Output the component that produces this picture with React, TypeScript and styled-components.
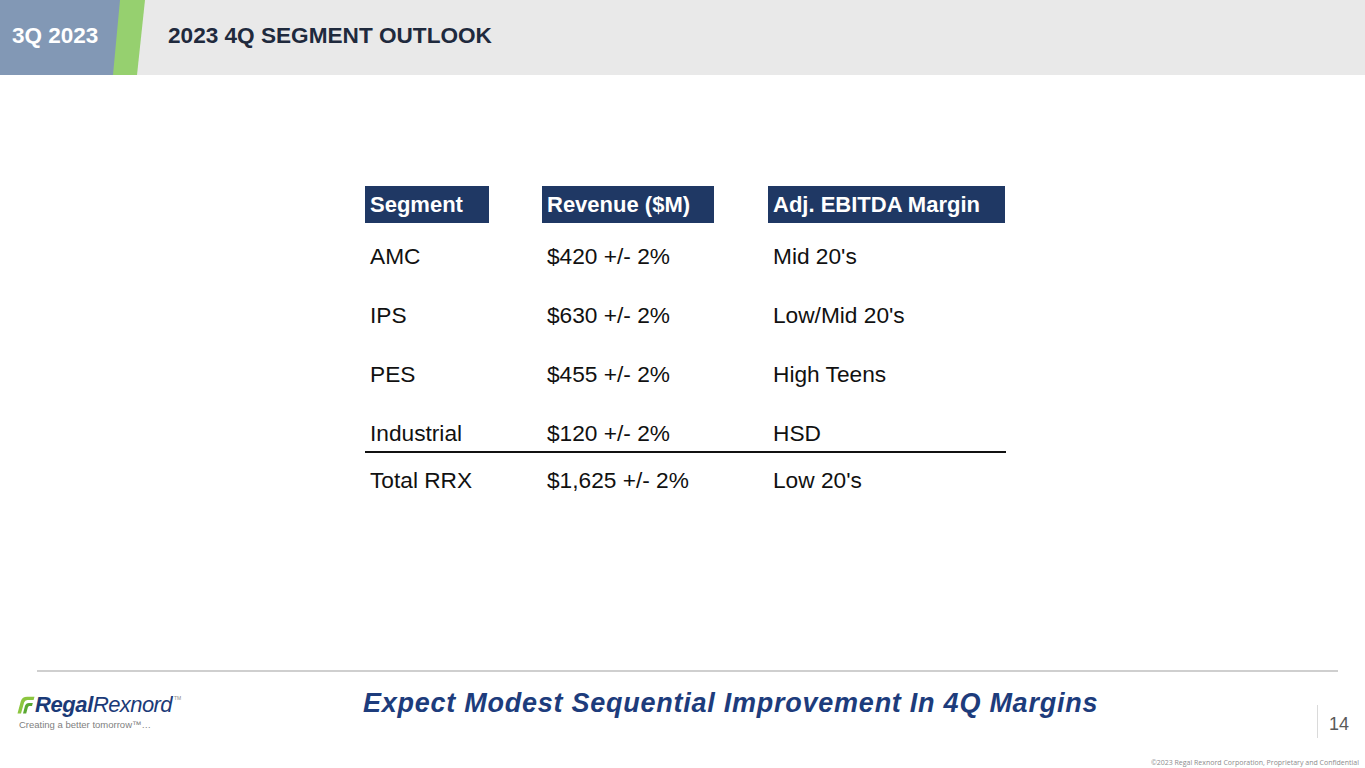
import React from "react";
import styled, { createGlobalStyle } from "styled-components";

const Global = createGlobalStyle`
  html, body { margin: 0; padding: 0; background: #ffffff; }
  body { font-family: "Liberation Sans", Arial, sans-serif; }
`;

const Slide = styled.div`
  width: 1365px;
  height: 768px;
  display: flex;
  flex-direction: column;
  overflow: hidden;
  background: #ffffff;
  font-family: "Liberation Sans", Arial, sans-serif;
`;

const Header = styled.header`
  flex: 0 0 75px;
  display: flex;
  align-items: stretch;
  background: #e9e9e9;
`;

const Tag = styled.div`
  width: 145px;
  display: flex;
  background: #96d06f;
  clip-path: polygon(0 0, 145px 0, 137px 100%, 0 100%);
`;

const TagLabel = styled.div`
  width: 120px;
  display: flex;
  align-items: center;
  padding: 0 0 3px 12px;
  box-sizing: border-box;
  background: #8298b5;
  clip-path: polygon(0 0, 120px 0, 113px 100%, 0 100%);
  color: #ffffff;
  font-weight: 700;
  font-size: 22.5px;
  white-space: nowrap;
`;

const Title = styled.h1`
  margin: 0 0 0 23px;
  display: flex;
  align-items: center;
  padding-bottom: 3px;
  color: #1f2a3d;
  font-size: 22.6px;
  font-weight: 700;
`;

const Main = styled.main`
  flex: 1 1 auto;
  display: flex;
  flex-direction: column;
  padding: 111px 0 0 365px;
`;

const Table = styled.div`
  width: 641px;
  display: flex;
  flex-direction: column;
`;

const HeadRow = styled.div`
  display: grid;
  grid-template-columns: 177px 226px 238px;
  height: 37px;
`;

const HeadCell = styled.div<{ $w: number }>`
  width: ${(p) => p.$w}px;
  height: 37px;
  display: flex;
  align-items: center;
  padding-left: 5px;
  box-sizing: border-box;
  background: #1f3864;
  color: #ffffff;
  font-weight: 700;
  font-size: 22px;
  white-space: nowrap;
`;

const BodyRow = styled.div<{ $top: number }>`
  display: grid;
  grid-template-columns: 177px 226px 238px;
  margin-top: ${(p) => p.$top}px;
  line-height: 26px;
  font-size: 22.7px;
  color: #111111;
`;

const Cell = styled.div`
  padding-left: 5px;
  white-space: nowrap;
`;

const Divider = styled.div`
  height: 2px;
  margin-top: 5px;
  background: #111111;
`;

const Footer = styled.footer`
  flex: 0 0 98px;
  display: flex;
  flex-direction: column;
`;

const Rule = styled.div`
  height: 2px;
  margin: 0 27px 0 37px;
  background: #cfcfcf;
`;

const FooterRow = styled.div`
  display: flex;
  align-items: flex-start;
  padding-left: 17px;
`;

const Logo = styled.div`
  flex: 0 0 346px;
  margin-top: 21px;
  display: flex;
  flex-direction: column;
`;

const Wordmark = styled.div`
  display: flex;
  align-items: flex-end;
  height: 24px;
  line-height: 24px;
  color: #1b3a78;
  font-style: italic;
  font-size: 22px;
`;

const Mark = styled.svg`
  width: 18px;
  height: 18px;
  margin: 0 0 3px 0;
`;

const Regal = styled.span`
  font-weight: 700;
  letter-spacing: -0.4px;
`;

const Rexnord = styled.span`
  font-weight: 400;
  letter-spacing: -0.6px;
`;

const Tm = styled.sup`
  font-size: 5px;
  font-style: normal;
  align-self: flex-start;
  line-height: 10px;
  margin-left: 2px;
  color: #8a8a8a;
`;

const Tagline = styled.div`
  margin: 2px 0 0 2px;
  font-size: 9.5px;
  line-height: 11px;
  color: #808080;
  white-space: nowrap;
`;

const Message = styled.div`
  margin-top: 16px;
  font-size: 27px;
  line-height: 30px;
  font-weight: 700;
  font-style: italic;
  letter-spacing: 0.75px;
  color: #1d3c7c;
  white-space: nowrap;
`;

const PageNum = styled.div`
  margin: 33px 16px 0 auto;
  height: 33px;
  box-sizing: border-box;
  border-left: 1px solid #dadada;
  padding: 9px 0 0 11px;
  font-size: 18px;
  line-height: 20px;
  color: #595959;
`;

const Copyright = styled.div`
  margin-top: auto;
  padding: 0 6px 1px 0;
  text-align: right;
  font-family: "Open Sans", "Liberation Sans", sans-serif;
  font-size: 7px;
  line-height: 9px;
  color: #8c8c8c;
`;

const rows = [
  ["AMC", "$420 +/- 2%", "Mid 20's"],
  ["IPS", "$630 +/- 2%", "Low/Mid 20's"],
  ["PES", "$455 +/- 2%", "High Teens"],
  ["Industrial", "$120 +/- 2%", "HSD"],
];

export default function App() {
  return (
    <Slide>
      <Global />
      <Header>
        <Tag>
          <TagLabel>3Q 2023</TagLabel>
        </Tag>
        <Title>2023 4Q SEGMENT OUTLOOK</Title>
      </Header>
      <Main>
        <Table>
          <HeadRow>
            <HeadCell $w={124}>Segment</HeadCell>
            <HeadCell $w={172}>Revenue ($M)</HeadCell>
            <HeadCell $w={237}>Adj. EBITDA Margin</HeadCell>
          </HeadRow>
          {rows.map((r, i) => (
            <BodyRow key={r[0]} $top={i === 0 ? 20 : 33}>
              <Cell>{r[0]}</Cell>
              <Cell>{r[1]}</Cell>
              <Cell>{r[2]}</Cell>
            </BodyRow>
          ))}
          <Divider />
          <BodyRow $top={14}>
            <Cell>Total RRX</Cell>
            <Cell>$1,625 +/- 2%</Cell>
            <Cell>Low 20's</Cell>
          </BodyRow>
        </Table>
      </Main>
      <Footer>
        <Rule />
        <FooterRow>
          <Logo>
            <Wordmark>
              <Mark viewBox="0 0 18 18">
                <path d="M0.5 17.5 L3.8 5.2 Q5.2 0.8 10.2 0.8 L17.5 0.8 L16.6 4 L10.4 4 Q7.9 4 7.1 6.6 L4 17.5 Z" fill="#8cc63f" />
                <path d="M6 17.5 L8 9.8 Q8.9 6.9 12 6.9 L15.8 6.9 L15 10 L12.3 10 Q11.2 10 10.8 11.5 L9.2 17.5 Z" fill="#5aa832" />
              </Mark>
              <Regal>Regal</Regal>
              <Rexnord>Rexnord</Rexnord>
              <Tm>TM</Tm>
            </Wordmark>
            <Tagline>Creating a better tomorrow™…</Tagline>
          </Logo>
          <Message>Expect Modest Sequential Improvement In 4Q Margins</Message>
          <PageNum>14</PageNum>
        </FooterRow>
        <Copyright>©2023 Regal Rexnord Corporation, Proprietary and Confidential</Copyright>
      </Footer>
    </Slide>
  );
}
